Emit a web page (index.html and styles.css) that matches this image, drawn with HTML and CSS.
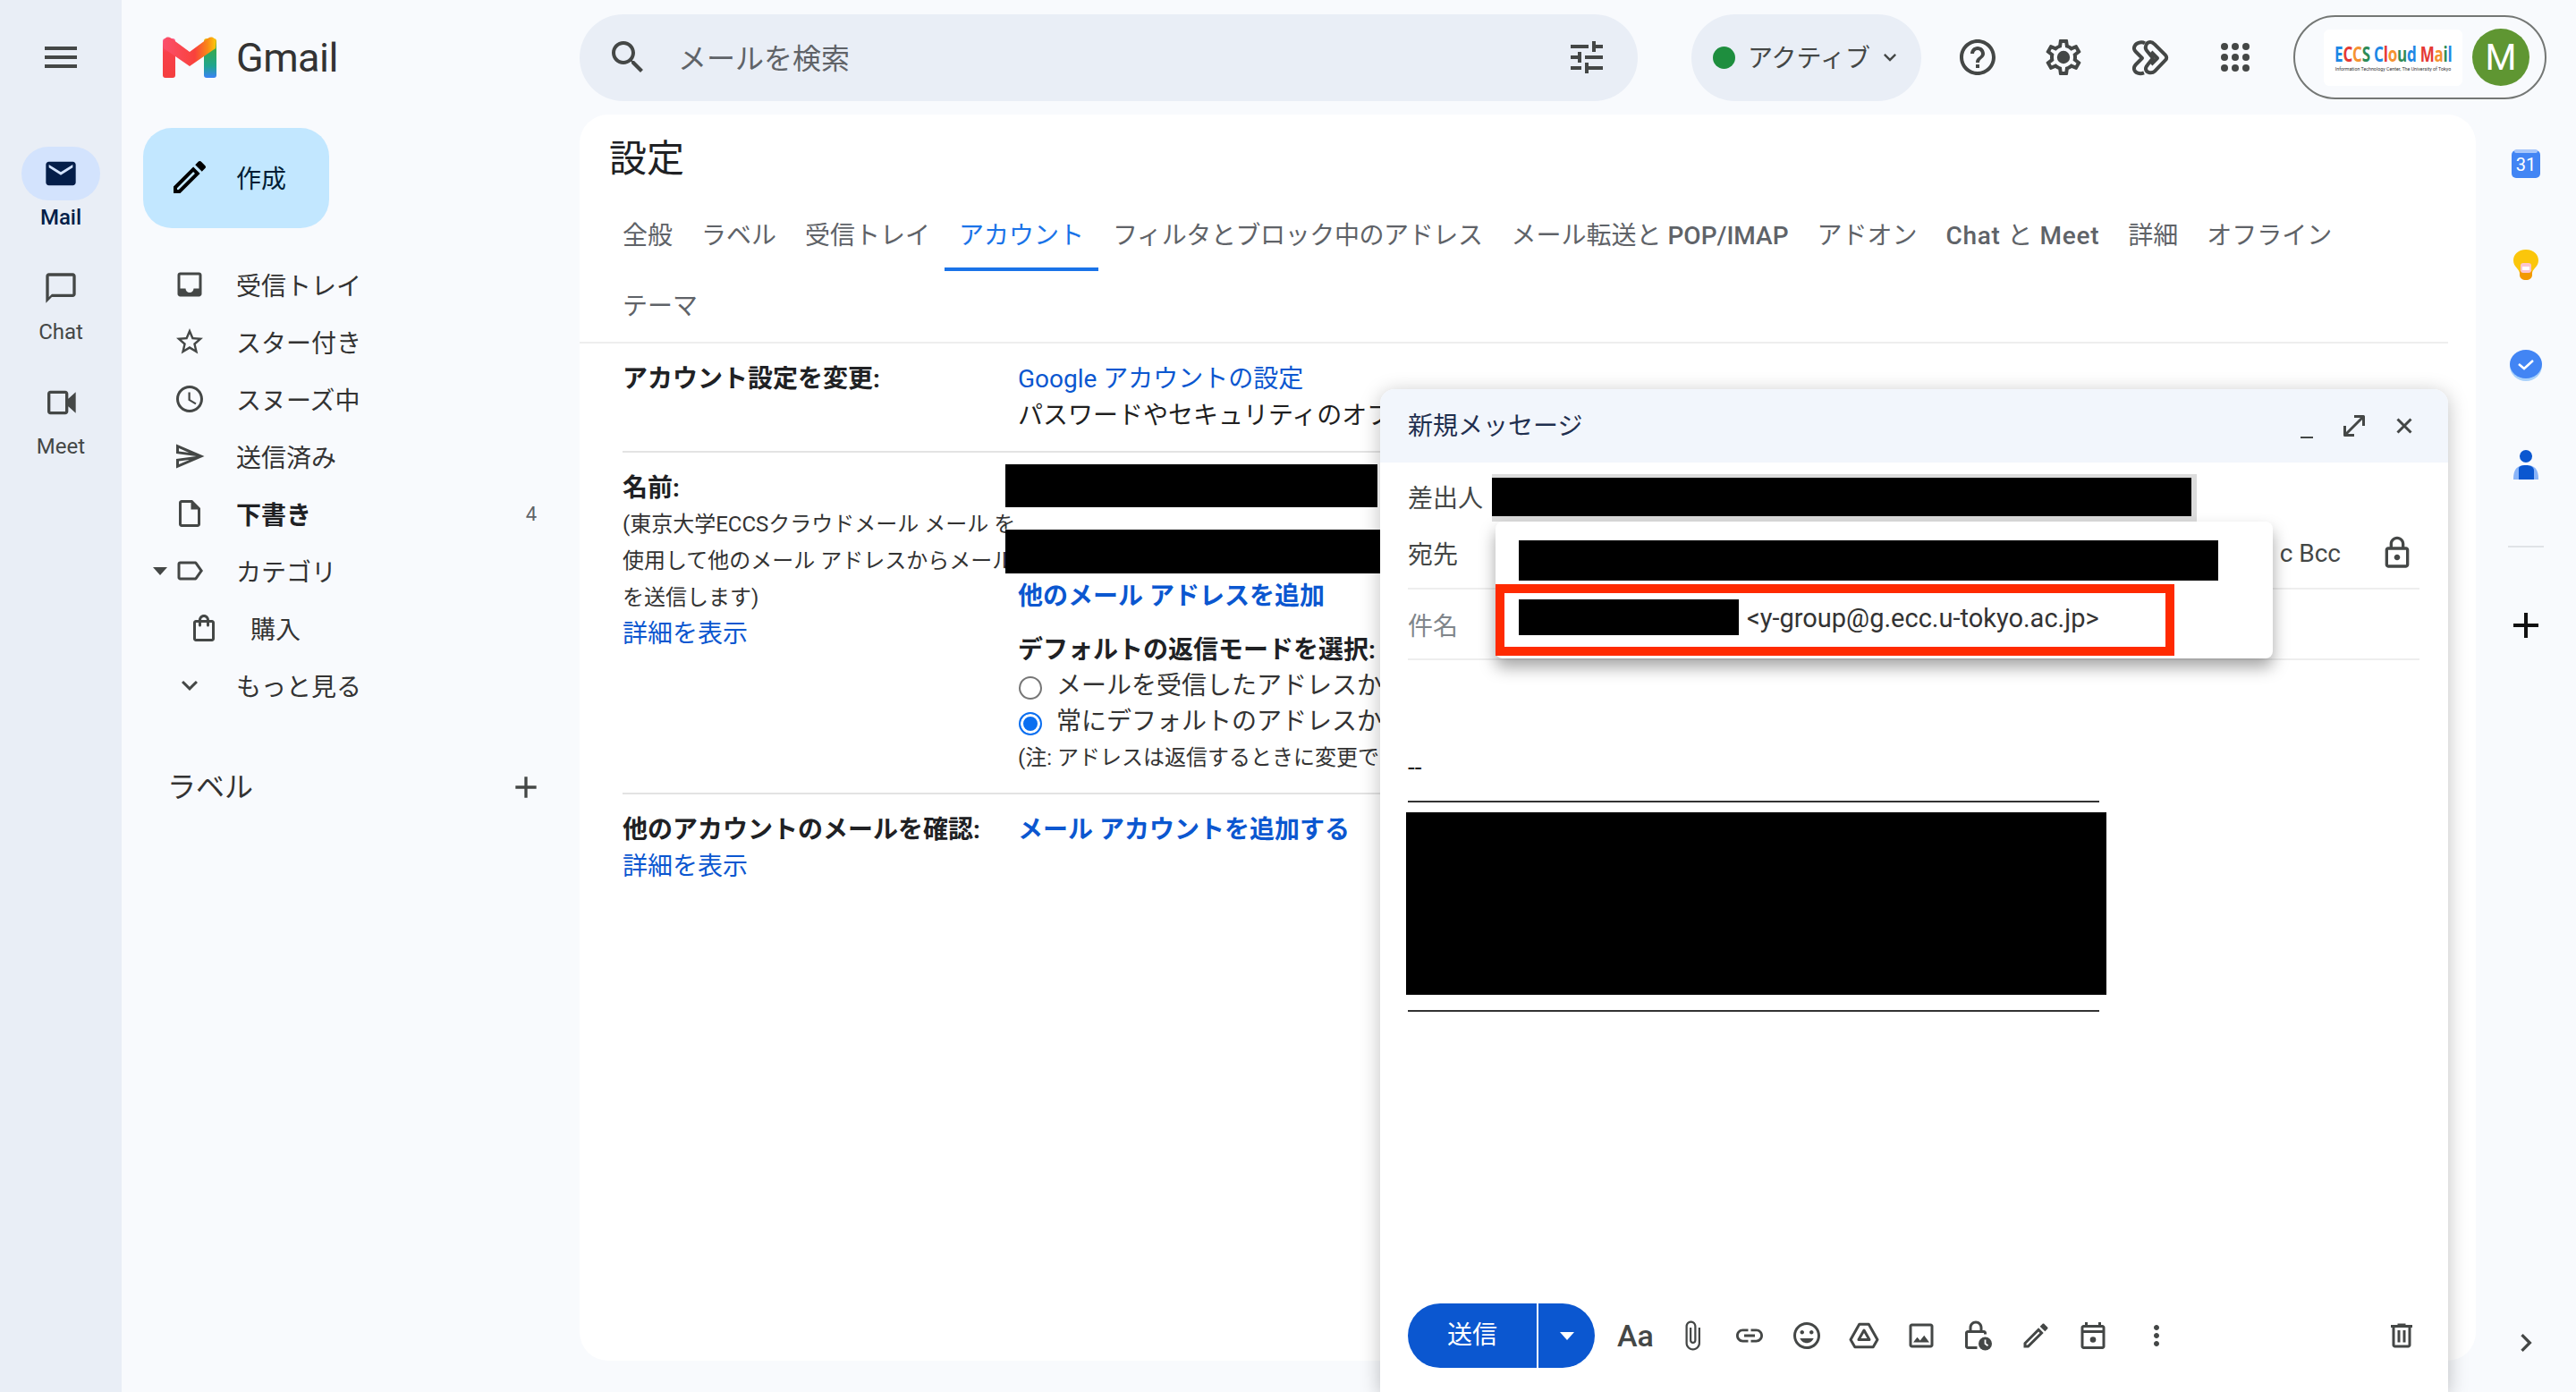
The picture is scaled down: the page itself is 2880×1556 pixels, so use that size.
FILE: index.html
```html
<!DOCTYPE html>
<html lang="ja">
<head>
  <meta charset="UTF-8">
  <meta name="viewport" content="width=device-width, initial-scale=1.0">
  <title>設定 - Gmail</title>
  <link rel="stylesheet" href="styles.css">
</head>
<body>
  <div class="app">
    <nav class="rail">
      <svg class="ic menu-ic" viewBox="0 0 24 24"><path d="M3 18h18v-2H3v2zm0-5h18v-2H3v2zm0-7v2h18V6H3z"/></svg>
      <div class="rail-item active">
        <div class="rail-pill"><svg class="ic mail-ic" viewBox="0 0 24 24"><path d="M20 4H4c-1.100 0-2 .9-2 2v12c0 1.100.9 2 2 2h16c1.100 0 2-.9 2-2V6c0-1.100-.9-2-2-2zm0 4l-8 5-8-5V6l8 5 8-5v2z"/></svg></div>
        <span>Mail</span>
      </div>
      <div class="rail-item">
        <div class="rail-pill"><svg class="ic" viewBox="0 0 24 24"><path d="M20 2H4c-1.100 0-2 .9-2 2v18l4-4h14c1.100 0 2-.9 2-2V4c0-1.100-.9-2-2-2zm0 14H6l-2 2V4h16v12z"/></svg></div>
        <span>Chat</span>
      </div>
      <div class="rail-item">
        <div class="rail-pill"><svg class="ic" viewBox="0 0 24 24"><path d="M5 4h10c1.100 0 2 .9 2 2v3.500l5-4.500v14l-5-4.500V18c0 1.100-.9 2-2 2H5c-1.100 0-2-.9-2-2V6c0-1.100.9-2 2-2zm0 2v12h10V6H5z"/></svg></div>
        <span>Meet</span>
      </div>
    </nav>

    <div class="content">
      <header class="topbar">
        <div class="brand">
          <svg class="gmail-m" viewBox="0 0 60 46">
            <defs>
              <linearGradient id="m-left" x1="0" y1="0" x2="0" y2="1"><stop offset="0" stop-color="#ff5d8f"/><stop offset=".35" stop-color="#f8404a"/><stop offset="1" stop-color="#f43f3f"/></linearGradient>
              <linearGradient id="m-right" x1="0" y1="0" x2="0" y2="1"><stop offset="0" stop-color="#fbbc04"/><stop offset=".3" stop-color="#34a853"/><stop offset=".7" stop-color="#1fa58f"/><stop offset="1" stop-color="#3b82f6"/></linearGradient>
              <linearGradient id="m-mid" x1="0" y1="0" x2="1" y2="0"><stop offset="0" stop-color="#fb4f6b"/><stop offset=".6" stop-color="#f9413c"/><stop offset=".85" stop-color="#f98a16"/><stop offset="1" stop-color="#fdc70a"/></linearGradient>
            </defs>
            <rect x="0" y="2" width="14" height="44" rx="3" fill="url(#m-left)"/>
            <rect x="46" y="2" width="14" height="44" rx="3" fill="url(#m-right)"/>
            <path d="M1 6C1 1 6-1 9 1.500L30 17 51 1.500C54-1 59 1 59 6V13L30 33 1 13z" fill="url(#m-mid)"/>
          </svg>
          <span class="brand-name">Gmail</span>
        </div>
        <div class="search">
          <svg class="ic ic-48" viewBox="0 0 24 24"><path d="M15.500 14h-.79l-.28-.27C15.410 12.590 16 11.110 16 9.500 16 5.910 13.090 3 9.500 3S3 5.910 3 9.500 5.910 16 9.500 16c1.610 0 3.090-.59 4.230-1.570l.27.28v.79l5 4.990L20.490 19l-4.990-5zm-6 0C7.010 14 5 11.990 5 9.500S7.010 5 9.500 5 14 7.010 14 9.500 11.990 14 9.500 14z"/></svg>
          <span class="search-text">メールを検索</span>
          <svg class="ic ic-48 search-tune" viewBox="0 0 24 24"><path d="M3 17v2h6v-2H3zM3 5v2h10V5H3zm10 16v-2h8v-2h-8v-2h-2v6h2zM7 9v2H3v2h4v2h2V9H7zm14 4v-2H11v2h10zm-6-4h2V7h4V5h-4V3h-2v6z"/></svg>
        </div>
        <div class="status-pill">
          <span class="status-dot"></span>
          <span class="status-text">アクティブ</span>
          <svg class="ic status-chev" viewBox="0 0 24 24"><path d="M16.590 8.590L12 13.170 7.410 8.590 6 10l6 6 6-6z"/></svg>
        </div>
        <div class="top-icons">
          <svg class="ic ic-48" viewBox="0 0 24 24"><path d="M11 18h2v-2h-2v2zm1-16C6.480 2 2 6.480 2 12s4.480 10 10 10 10-4.480 10-10S17.520 2 12 2zm0 18c-4.410 0-8-3.590-8-8s3.590-8 8-8 8 3.590 8 8-3.590 8-8 8zm0-14c-2.210 0-4 1.790-4 4h2c0-1.100.9-2 2-2s2 .9 2 2c0 2-3 1.750-3 5h2c0-2.250 3-2.500 3-5 0-2.210-1.790-4-4-4z"/></svg>
          <svg class="ic ic-48" viewBox="0 0 24 24"><path d="M19.430 12.980c.04-.32.07-.64.07-.98 0-.34-.03-.66-.07-.98l2.110-1.650c.19-.15.24-.42.12-.64l-2-3.460c-.09-.16-.26-.25-.44-.25-.06 0-.12.01-.17.03l-2.490 1c-.52-.4-1.080-.73-1.690-.98l-.38-2.650C14.460 2.180 14.250 2 14 2h-4c-.25 0-.46.18-.49.42l-.38 2.650c-.61.25-1.170.59-1.690.98l-2.490-1c-.06-.02-.12-.03-.18-.03-.17 0-.34.09-.43.25l-2 3.460c-.13.22-.07.49.12.64l2.110 1.650c-.04.32-.07.65-.07.98 0 .33.03.66.07.98l-2.110 1.650c-.19.15-.24.42-.12.64l2 3.460c.09.16.26.25.44.25.06 0 .12-.01.17-.03l2.490-1c.52.4 1.080.73 1.690.98l.38 2.650c.03.24.24.42.49.42h4c.25 0 .46-.18.49-.42l.38-2.650c.61-.25 1.170-.59 1.690-.98l2.490 1c.06.02.12.03.18.03.17 0 .34-.09.43-.25l2-3.460c.12-.22.07-.49-.12-.64l-2.110-1.650zm-1.980-1.710c.04.31.05.52.05.73 0 .21-.02.43-.05.73l-.14 1.130.89.7 1.080.84-.7 1.210-1.270-.51-1.040-.42-.9.68c-.43.32-.84.56-1.250.73l-1.060.43-.16 1.130-.2 1.350h-1.400l-.19-1.350-.16-1.130-1.060-.43c-.43-.18-.83-.41-1.230-.71l-.91-.7-1.060.43-1.270.51-.7-1.210 1.080-.84.89-.7-.14-1.130c-.03-.31-.05-.54-.05-.74s.02-.43.05-.73l.14-1.130-.89-.7-1.080-.84.7-1.210 1.270.51 1.040.42.9-.68c.43-.32.84-.56 1.250-.73l1.060-.43.16-1.130.2-1.350h1.390l.19 1.350.16 1.130 1.060.43c.43.18.83.41 1.230.71l.91.7 1.060-.43 1.270-.51.7 1.210-1.070.85-.89.7.14 1.130z"/><circle cx="12" cy="12" r="3.600"/></svg>
          <svg class="ic ic-48 line-ic" viewBox="0 0 24 24"><path d="M12.500 3.500c1 0 1.800.6 2.500 1.300l6 6c.8.8.8 2 0 2.800l-6 6.200c-1.500 1.500-4.500 1-5-1-.2-1 .3-1.700 1-2.500l3-3.800-3.300-4c-.8-.9-1-1.800-.7-2.700.3-1.300 1.300-2.300 2.500-2.300z"/><path d="M9.500 4.200C7.500 3 4 4 3.500 6.500c-.2 1 .3 1.800 1 2.500l3.500 3.500-3.500 3.500c-.8.8-1.200 1.700-1 2.700.5 2 3 3 5.500 2"/><path d="M13 9l3.500 3.500L13 16"/></svg>
          <svg class="ic ic-48" viewBox="0 0 24 24"><circle cx="6" cy="6" r="2"/><circle cx="12" cy="6" r="2"/><circle cx="18" cy="6" r="2"/><circle cx="6" cy="12" r="2"/><circle cx="12" cy="12" r="2"/><circle cx="18" cy="12" r="2"/><circle cx="6" cy="18" r="2"/><circle cx="12" cy="18" r="2"/><circle cx="18" cy="18" r="2"/></svg>
        </div>
        <div class="account">
          <div class="org-logo">
            <div class="org-name"><i class="c-b">E</i><i class="c-r">C</i><i class="c-y">C</i><i class="c-g">S</i> <i class="c-b">C</i><i class="c-r">l</i><i class="c-y">o</i><i class="c-g">u</i><i class="c-b">d</i> <i class="c-r">M</i><i class="c-y">a</i><i class="c-g">i</i><i class="c-b">l</i></div>
            <div class="org-sub">Information Technology Center, The University of Tokyo</div>
          </div>
          <div class="avatar">M</div>
        </div>
      </header>

      <div class="workarea">
        <aside class="sidebar">
          <div class="compose-btn">
            <svg class="ic pencil-ic" viewBox="0 0 24 24"><path d="M3 17.250V21h3.750L17.810 9.940l-3.750-3.750L3 17.250zM5.920 19H5v-.92l9.060-9.060.92.92L5.920 19zM20.710 5.630l-2.340-2.340c-.2-.2-.45-.29-.71-.29s-.51.1-.7.29l-1.830 1.830 3.750 3.750 1.830-1.830c.39-.39.39-1.020 0-1.410z"/></svg>
            <span>作成</span>
          </div>
          <ul class="nav">
            <li class="nav-row"><svg class="ic" viewBox="0 0 24 24"><path d="M19 3H4.990c-1.110 0-1.980.89-1.980 2L3 19c0 1.100.88 2 1.990 2H19c1.100 0 2-.9 2-2V5c0-1.110-.9-2-2-2zm0 12h-4c0 1.660-1.350 3-3 3s-3-1.340-3-3H4.990V5H19v10z"/></svg>受信トレイ</li>
            <li class="nav-row"><svg class="ic" viewBox="0 0 24 24"><path d="M22 9.240l-7.190-.62L12 2 9.190 8.630 2 9.240l5.460 4.730L5.820 21 12 17.270 18.180 21l-1.630-7.030L22 9.240zM12 15.400l-3.760 2.270 1-4.280-3.320-2.880 4.380-.38L12 6.100l1.710 4.040 4.380.38-3.320 2.880 1 4.280L12 15.400z"/></svg>スター付き</li>
            <li class="nav-row"><svg class="ic" viewBox="0 0 24 24"><path d="M11.990 2C6.470 2 2 6.480 2 12s4.470 10 9.990 10C17.520 22 22 17.520 22 12S17.520 2 11.990 2zM12 20c-4.420 0-8-3.580-8-8s3.580-8 8-8 8 3.580 8 8-3.580 8-8 8zm.5-13H11v6l5.250 3.150.75-1.230-4.500-2.670z"/></svg>スヌーズ中</li>
            <li class="nav-row"><svg class="ic" viewBox="0 0 24 24"><path d="M4.010 6.030l7.510 3.220-7.520-1 .01-2.220m7.500 8.720L4 17.970v-2.220l7.510-1M2.010 3L2 10l15 2-15 2 .01 7L23 12 2.010 3z"/></svg>送信済み</li>
            <li class="nav-row bold"><svg class="ic" viewBox="0 0 24 24"><path d="M14 2H6c-1.100 0-2 .9-2 2v16c0 1.100.9 2 2 2h12c1.100 0 2-.9 2-2V8l-6-6zm4 18H6V4h7v5h5v11z"/></svg>下書き<span class="nav-count">4</span></li>
            <li class="nav-row"><span class="nav-arrow"></span><svg class="ic" viewBox="0 0 24 24"><path d="M17.630 5.840C17.270 5.330 16.670 5 16 5L5 5.010C3.900 5.010 3 5.900 3 7v10c0 1.100.9 1.990 2 1.990L16 19c.67 0 1.270-.33 1.630-.84L22 12l-4.370-6.160zM16 17H5V7h11l3.550 5L16 17z"/></svg>カテゴリ</li>
            <li class="nav-row sub"><svg class="ic" viewBox="0 0 24 24"><path d="M18 6h-2c0-2.210-1.790-4-4-4S8 3.790 8 6H6c-1.100 0-2 .9-2 2v12c0 1.100.9 2 2 2h12c1.100 0 2-.9 2-2V8c0-1.100-.9-2-2-2zm-6-2c1.100 0 2 .9 2 2h-4c0-1.100.9-2 2-2zm6 16H6V8h2v2c0 .55.45 1 1 1s1-.45 1-1V8h4v2c0 .55.45 1 1 1s1-.45 1-1V8h2v12z"/></svg>購入</li>
            <li class="nav-row"><svg class="ic" viewBox="0 0 24 24"><path d="M16.590 8.590L12 13.170 7.410 8.590 6 10l6 6 6-6z"/></svg>もっと見る</li>
          </ul>
          <div class="labels-head">
            <span>ラベル</span>
            <svg class="ic" viewBox="0 0 24 24"><path d="M19 13h-6v6h-2v-6H5v-2h6V5h2v6h6v2z"/></svg>
          </div>
        </aside>

        <main class="settings">
          <h1 class="settings-title">設定</h1>
          <div class="tabs">
            <a class="tab">全般</a>
            <a class="tab">ラベル</a>
            <a class="tab">受信トレイ</a>
            <a class="tab active">アカウント</a>
            <a class="tab tight">フィルタとブロック中のアドレス</a>
            <a class="tab">メール転送と <b>POP/IMAP</b></a>
            <a class="tab">アドオン</a>
            <a class="tab wide"><b>Chat</b> と <b>Meet</b></a>
            <a class="tab">詳細</a>
            <a class="tab">オフライン</a>
            <a class="tab">テーマ</a>
          </div>

          <section class="row first">
            <div class="col-label"><strong>アカウント設定を変更:</strong></div>
            <div class="col-value">
              <a class="link">Google アカウントの設定</a>
              <div>パスワードやセキュリティのオプ</div>
            </div>
          </section>

          <section class="row names">
            <div class="col-label">
              <strong>名前:</strong>
              <div class="small">(東京大学ECCSクラウドメール メール を<br>使用して他のメール アドレスからメール<br>を送信します)</div>
              <a class="link more">詳細を表示</a>
            </div>
            <div class="col-value col-names">
              <div class="redact name-1"></div>
              <div class="redact name-2"></div>
              <a class="link strong">他のメール アドレスを追加</a>
              <div class="reply-head"><strong>デフォルトの返信モードを選択:</strong></div>
              <label class="radio-row"><input type="radio" name="reply">メールを受信したアドレスか</label>
              <label class="radio-row"><input type="radio" name="reply" checked>常にデフォルトのアドレスか</label>
              <div class="small">(注: アドレスは返信するときに変更で</div>
            </div>
          </section>

          <section class="row last">
            <div class="col-label">
              <strong>他のアカウントのメールを確認:</strong>
              <a class="link">詳細を表示</a>
            </div>
            <div class="col-value">
              <a class="link strong">メール アカウントを追加する</a>
            </div>
          </section>
        </main>

        <aside class="addons">
          <svg class="addon" viewBox="0 0 40 40"><rect x="4" y="4" width="32" height="31" rx="5" fill="#4285f4"/><rect x="7" y="3" width="26" height="4" rx="2" fill="#a8c7fa"/><text x="20" y="27" class="addon-num">31</text></svg>
          <svg class="addon" viewBox="0 0 40 40"><path d="M20 3C11 3 6 9 6 15c0 7 6 9 7 14h14c1-5 7-7 7-14C34 9 29 3 20 3z" fill="#fbc60b"/><path d="M13 27h14v4c0 4-3 6-7 6s-7-2-7-6z" fill="#f29900"/><rect x="14" y="18" width="12" height="11" rx="3" fill="#fcc5cf"/><rect x="16" y="22" width="8" height="4" fill="#fff"/></svg>
          <svg class="addon" viewBox="0 0 40 40"><ellipse cx="20" cy="21" rx="18" ry="17" fill="#a8d1fb"/><ellipse cx="20" cy="19" rx="18" ry="16" fill="#4285f4"/><path d="M12 19l6 5 10-9" fill="none" stroke="#fff" stroke-width="2.500"/></svg>
          <svg class="addon" viewBox="0 0 40 40"><circle cx="20" cy="10" r="7" fill="#0b57d0"/><path d="M6 36c0-12 4-16 14-16s14 4 14 16z" fill="#8ab4f8"/><path d="M12 36V24c0-3 3-4 8-4s9 2 9 6v10z" fill="#0b57d0"/></svg>
          <div class="addon-sep"></div>
          <svg class="ic ic-48 addon-plus" viewBox="0 0 24 24"><path d="M19 13h-6v6h-2v-6H5v-2h6V5h2v6h6v2z"/></svg>
          <svg class="ic addon-chev" viewBox="0 0 24 24"><path d="M8.590 16.590L13.170 12 8.590 7.410 10 6l6 6-6 6z"/></svg>
        </aside>
      </div>
    </div>

    <!-- compose window floats over settings -->
    <div class="compose">
      <div class="compose-head">
        <span>新規メッセージ</span>
        <div class="compose-ctrls">
          <span class="ctrl-min"></span>
          <svg class="ctrl-ic line-ic" viewBox="0 0 24 24"><path d="M6 18L18 6M12 5h7v7M5 12v7h7"/></svg>
          <svg class="ctrl-ic line-ic" viewBox="0 0 24 24"><path d="M7 7l10 10M17 7L7 17"/></svg>
        </div>
      </div>
      <div class="field from">
        <span class="field-name">差出人</span>
        <div class="redact from-box"></div>
      </div>
      <div class="field to">
        <span class="field-name">宛先</span>
        <span class="cc">c Bcc</span>
        <svg class="ic lock-ic" viewBox="0 0 24 24"><path d="M18 8h-1V6c0-2.760-2.240-5-5-5S7 3.240 7 6v2H6c-1.100 0-2 .9-2 2v10c0 1.100.9 2 2 2h12c1.100 0 2-.9 2-2V10c0-1.100-.9-2-2-2zM9 6c0-1.660 1.340-3 3-3s3 1.340 3 3v2H9V6zm9 14H6V10h12v10zm-6-3c1.100 0 2-.9 2-2s-.9-2-2-2-2 .9-2 2 .9 2 2 2z"/></svg>
      </div>
      <div class="field subject"><span class="field-name">件名</span></div>

      <div class="compose-body">
        <div class="sig-dash">--</div>
        <div class="sig-line"></div>
        <div class="redact sig-box"></div>
        <div class="sig-line"></div>
      </div>

      <div class="compose-foot">
        <div class="send-btn">
          <span class="send-main">送信</span>
          <span class="send-more"><i></i></span>
        </div>
        <span class="tool tool-aa">Aa</span>
        <svg class="ic tool" viewBox="0 0 24 24"><path d="M16.500 6v11.500c0 2.210-1.790 4-4 4s-4-1.790-4-4V5c0-1.380 1.120-2.500 2.500-2.500s2.500 1.120 2.500 2.500v10.500c0 .55-.45 1-1 1s-1-.45-1-1V6H10v9.500c0 1.380 1.120 2.500 2.500 2.500s2.500-1.120 2.500-2.500V5c0-2.210-1.790-4-4-4S7 2.790 7 5v12.500c0 3.040 2.460 5.500 5.500 5.500s5.500-2.460 5.500-5.500V6h-1.500z"/></svg>
        <svg class="ic tool" viewBox="0 0 24 24"><path d="M3.900 12c0-1.710 1.390-3.100 3.100-3.100h4V7H7c-2.760 0-5 2.240-5 5s2.240 5 5 5h4v-1.900H7c-1.710 0-3.100-1.390-3.100-3.100zM8 13h8v-2H8v2zm9-6h-4v1.900h4c1.710 0 3.100 1.390 3.100 3.100s-1.390 3.100-3.100 3.100h-4V17h4c2.760 0 5-2.240 5-5s-2.240-5-5-5z"/></svg>
        <svg class="ic tool" viewBox="0 0 24 24"><path d="M11.990 2C6.470 2 2 6.480 2 12s4.470 10 9.990 10C17.520 22 22 17.520 22 12S17.520 2 11.990 2zM12 20c-4.420 0-8-3.580-8-8s3.580-8 8-8 8 3.580 8 8-3.580 8-8 8zm3.500-9c.83 0 1.500-.67 1.500-1.500S16.330 8 15.500 8 14 8.670 14 9.500s.67 1.500 1.500 1.500zm-7 0c.83 0 1.500-.67 1.500-1.500S9.330 8 8.500 8 7 8.670 7 9.500 7.670 11 8.500 11zm3.500 6.500c2.330 0 4.310-1.460 5.110-3.500H6.890c.8 2.040 2.780 3.500 5.110 3.500z"/></svg>
        <svg class="ic tool line-ic" viewBox="0 0 24 24"><path d="M8.500 3.500h7L22 15l-3.200 5.500H5.200L2 15z"/><path d="M12 8l4 7H8z"/></svg>
        <svg class="ic tool" viewBox="0 0 24 24"><path d="M19 5v14H5V5h14m0-2H5c-1.100 0-2 .9-2 2v14c0 1.100.9 2 2 2h14c1.100 0 2-.9 2-2V5c0-1.100-.9-2-2-2zm-4.860 8.860l-3 3.870L9 13.140 6 17h12l-3.860-5.140z"/></svg>
        <svg class="ic tool" viewBox="0 0 24 24"><path d="M16 8h-1V6c0-2.760-2.240-5-5-5S5 3.240 5 6v2H4c-1.100 0-2 .9-2 2v10c0 1.100.9 2 2 2h7v-2H4V10h12v1h2v-1c0-1.100-.9-2-2-2zM7 6c0-1.660 1.340-3 3-3s3 1.340 3 3v2H7V6z"/><circle cx="17" cy="18" r="5"/><path d="M17 15v3l2 1.500" fill="none" stroke="#fff" stroke-width="1.200"/></svg>
        <svg class="ic tool" viewBox="0 0 24 24"><path d="M3 17.250V21h3.750L17.810 9.940l-3.750-3.750L3 17.250zM5.920 19H5v-.92l9.060-9.060.92.92L5.920 19zM20.710 5.630l-2.340-2.340c-.2-.2-.45-.29-.71-.29s-.51.1-.7.29l-1.830 1.830 3.750 3.750 1.830-1.830c.39-.39.39-1.020 0-1.410z"/></svg>
        <svg class="ic tool" viewBox="0 0 24 24"><path d="M19 4h-1V2h-2v2H8V2H6v2H5c-1.100 0-2 .9-2 2v14c0 1.100.9 2 2 2h14c1.100 0 2-.9 2-2V6c0-1.100-.9-2-2-2zm0 16H5V10h14v10zM5 8V6h14v2H5z"/><circle cx="12" cy="15" r="2.200"/></svg>
        <svg class="ic tool tool-more" viewBox="0 0 24 24"><path d="M12 8c1.100 0 2-.9 2-2s-.9-2-2-2-2 .9-2 2 .9 2 2 2zm0 2c-1.100 0-2 .9-2 2s.9 2 2 2 2-.9 2-2-.9-2-2-2zm0 6c-1.100 0-2 .9-2 2s.9 2 2 2 2-.9 2-2-.9-2-2-2z"/></svg>
        <svg class="ic tool tool-trash" viewBox="0 0 24 24"><path d="M15 4V3H9v1H4v2h1v13c0 1.100.9 2 2 2h10c1.100 0 2-.9 2-2V6h1V4h-5zm2 15H7V6h10v13zM9 8h2v9H9zm4 0h2v9h-2z"/></svg>
      </div>

      <div class="suggest">
        <div class="redact suggest-1"></div>
        <div class="suggest-hit">
          <div class="redact suggest-2"></div>
          <span>&lt;y-group@g.ecc.u-tokyo.ac.jp&gt;</span>
        </div>
      </div>
    </div>
  </div>
</body>
</html>
```

FILE: styles.css
```css
* {
  box-sizing: border-box;
}
html, body {
  margin: 0;
  height: 100%;
}
body {
  font-family: Roboto, "Noto Sans CJK JP", sans-serif;
  font-size: 28px;
  color: #1f1f1f;
  background: #f8fafd;
  overflow: hidden;
}
a {
  text-decoration: none;
}
ul {
  list-style: none;
  margin: 0;
  padding: 0;
}
.app {
  position: relative;
  display: flex;
  height: 100vh;
  overflow: hidden;
}

.ic {
  width: 40px;
  height: 40px;
  flex: none;
  fill: #444746;
}
.ic-48 {
  width: 48px;
  height: 48px;
}
.line-ic {
  fill: none;
  stroke: #444746;
  stroke-width: 2;
  stroke-linejoin: round;
}

/* left rail */
.rail {
  width: 136px;
  flex: none;
  background: #e9eef6;
  display: flex;
  flex-direction: column;
  align-items: center;
  padding-top: 40px;
}
.menu-ic {
  width: 48px;
  height: 48px;
  margin-bottom: 76px;
}
.rail-item {
  display: flex;
  flex-direction: column;
  align-items: center;
  gap: 4px;
  margin-bottom: 34px;
  font-size: 24px;
  line-height: 30px;
  color: #444746;
}
.rail-pill {
  width: 88px;
  height: 60px;
  border-radius: 30px;
  display: flex;
  align-items: center;
  justify-content: center;
}
.rail-item.active {
  color: #041e49;
  font-weight: 500;
}
.rail-item.active .rail-pill {
  background: #d3e3fd;
}
.mail-ic {
  fill: #041e49;
}

.content {
  flex: 1;
  min-width: 0;
  display: flex;
  flex-direction: column;
}

/* top bar */
.topbar {
  height: 128px;
  flex: none;
  display: flex;
  align-items: center;
}
.brand {
  width: 512px;
  flex: none;
  display: flex;
  align-items: center;
  gap: 22px;
  padding-left: 46px;
}
.gmail-m {
  width: 60px;
  height: 46px;
}
.brand-name {
  font-size: 45px;
  letter-spacing: -0.5px;
  color: #333;
}
.search {
  width: 1183px;
  height: 97px;
  flex: none;
  border-radius: 49px;
  background: #e9eef6;
  display: flex;
  align-items: center;
  gap: 32px;
  padding: 0 33px 0 30px;
  font-size: 32px;
  color: #5f6368;
}
.search-text {
  padding-bottom: 3px;
}
.search-tune {
  margin-left: auto;
}
.status-pill {
  width: 257px;
  height: 97px;
  flex: none;
  margin-left: 60px;
  border-radius: 49px;
  background: #e9eef6;
  display: flex;
  align-items: center;
  padding-left: 24px;
  color: #444746;
}
.status-dot {
  width: 25px;
  height: 25px;
  border-radius: 50%;
  background: #1e8e3e;
  margin-right: 14px;
}
.status-text {
  padding-bottom: 2px;
}
.status-chev {
  width: 28px;
  height: 28px;
  margin-left: 8px;
}
.top-icons {
  display: flex;
  gap: 48px;
  margin-left: 39px;
}
.account {
  width: 283px;
  height: 94px;
  flex: none;
  margin-left: 41px;
  border: 2px solid #747775;
  border-radius: 47px;
  display: flex;
  align-items: center;
  padding-left: 32px;
  gap: 11px;
}
.org-logo {
  width: 155px;
  height: 63px;
  background: #fff;
  border-radius: 6px;
  display: flex;
  flex-direction: column;
  align-items: center;
  justify-content: center;
}
.org-name {
  font-family: "Open Sans", sans-serif;
  font-size: 23px;
  font-weight: 700;
  line-height: 26px;
  letter-spacing: -0.3px;
  white-space: nowrap;
  transform: scaleX(.74);
}
.org-name i {
  font-style: normal;
}
.c-b { color: #1e88e5; }
.c-r { color: #e53935; }
.c-y { color: #f59331; }
.c-g { color: #2e8b57; }
.org-sub {
  font-size: 5.300px;
  line-height: 8px;
  color: #333;
  white-space: nowrap;
}
.avatar {
  width: 64px;
  height: 64px;
  border-radius: 50%;
  background: #5f9632;
  color: #fff;
  font-size: 40px;
  display: flex;
  align-items: center;
  justify-content: center;
}

.workarea {
  flex: 1;
  min-height: 0;
  display: flex;
}

/* sidebar */
.sidebar {
  width: 512px;
  flex: none;
  padding-top: 15px;
}
.compose-btn {
  width: 208px;
  height: 112px;
  margin-left: 24px;
  border-radius: 32px;
  background: #c2e7ff;
  display: flex;
  align-items: center;
  gap: 28px;
  padding: 0 0 3px 28px;
  color: #001d35;
}
.pencil-ic {
  width: 48px;
  height: 48px;
  fill: #000;
}
.nav {
  margin-top: 31px;
  width: 470px;
}
.nav-row {
  position: relative;
  height: 64px;
  display: flex;
  align-items: center;
  gap: 34px;
  padding-left: 58px;
  color: #333;
}
.nav-row .ic {
  width: 36px;
  height: 36px;
}
.nav-row.bold {
  font-weight: 700;
  color: #202124;
}
.nav-row.sub {
  padding-left: 74px;
}
.nav-count {
  margin-left: auto;
  font-size: 22px;
  font-weight: 400;
  color: #5f6368;
  margin-right: 6px;
}
.nav-arrow {
  position: absolute;
  left: 35px;
  top: 28px;
  border-left: 8px solid transparent;
  border-right: 8px solid transparent;
  border-top: 9px solid #444746;
}
.labels-head {
  width: 472px;
  margin-top: 58px;
  padding-left: 51px;
  display: flex;
  align-items: center;
  justify-content: space-between;
  font-size: 32px;
  line-height: 48px;
  color: #333;
}

/* settings card */
.settings {
  flex: 1;
  min-width: 0;
  margin-bottom: 35px;
  background: #fff;
  border-radius: 32px;
  padding: 24px 31px 0 0;
}
.settings-title {
  margin: 0 0 20px 33px;
  font-size: 42px;
  font-weight: 400;
  line-height: 52px;
  color: #202124;
}
.tabs {
  display: flex;
  flex-wrap: wrap;
  padding: 0 60px 0 32px;
  border-bottom: 2px solid #eee;
}
.tab {
  height: 79px;
  padding: 0 16px;
  line-height: 79px;
  color: #5f6368;
  white-space: nowrap;
}
.tab.tight {
  letter-spacing: -.4px;
}
.tab.wide {
  letter-spacing: .7px;
}
.tab b {
  font-weight: 500;
}
.tab.active {
  color: #1a73e8;
  box-shadow: inset 0 -4px 0 #1a73e8;
}
/* the rows stop where the compose window starts */
.row {
  width: 847px;
  display: flex;
  margin-left: 48px;
  padding: 19px 0 20px;
  border-bottom: 2px solid #e3e3e3;
  line-height: 41px;
  overflow: hidden;
}
.row.first {
  padding-bottom: 19px;
}
.row.names {
  padding-bottom: 18px;
}
.row.last {
  border-bottom: none;
}
.col-label {
  width: 442px;
  flex: none;
  white-space: nowrap;
}
.col-label strong,
.reply-head strong {
  font-weight: 700;
  color: #202124;
}
.col-value {
  flex: 1;
  min-width: 0;
  white-space: nowrap;
}
.col-names {
  margin-top: -6px;
}
.link {
  display: block;
  color: #0b57d0;
}
.link.more {
  margin-top: -1px;
}
.link.strong {
  font-weight: 700;
}
.small {
  font-size: 24px;
  color: #333;
}
.redact {
  background: #000;
}
.name-1 {
  width: 416px;
  height: 48px;
  margin: 0 0 25px -14px;
  position: relative;
}
.name-2 {
  width: 420px;
  height: 49px;
  margin: 0 0 5px -14px;
  position: relative;
}
.reply-head {
  margin-top: 19px;
}
.radio-row {
  display: flex;
  align-items: center;
  gap: 16px;
  line-height: 40px;
  color: #333;
}
.radio-row input {
  appearance: none;
  width: 26px;
  height: 26px;
  margin: 4px 0 0 1px;
  border: 2px solid #767676;
  border-radius: 50%;
  flex: none;
}
.radio-row input:checked {
  border-color: #0b6ff0;
  background: #0b6ff0;
  box-shadow: inset 0 0 0 3px #fff;
}

/* right add-on strip */
.addons {
  width: 112px;
  flex: none;
  display: flex;
  flex-direction: column;
  align-items: center;
  padding: 36px 0 35px;
}
.addon {
  width: 40px;
  height: 40px;
  flex: none;
  margin-bottom: 72px;
}
.addon-num {
  font-family: Roboto, sans-serif;
  font-size: 20px;
  fill: #fff;
  text-anchor: middle;
}
.addon-sep {
  width: 40px;
  height: 2px;
  flex: none;
  margin-top: -2px;
  background: #e0e3e7;
}
.addon-plus {
  margin-top: 63px;
  fill: #111;
}
.addon-chev {
  margin-top: auto;
}

/* compose window */
.compose {
  position: absolute;
  right: 143px;
  bottom: 0;
  width: 1194px;
  height: 1121px;
  background: #fff;
  border-radius: 16px 16px 0 0;
  box-shadow: 0 4px 22px rgba(0, 0, 0, .25);
  display: flex;
  flex-direction: column;
}
.compose-head {
  height: 82px;
  flex: none;
  background: #f2f6fc;
  border-radius: 16px 16px 0 0;
  display: flex;
  align-items: center;
  justify-content: space-between;
  padding: 0 31px 5px 31px;
  color: #1f2f4f;
}
.compose-ctrls {
  display: flex;
  align-items: center;
  gap: 20px;
  margin-top: 5px;
}
.ctrl-min {
  width: 14px;
  height: 2px;
  margin: 26px 8px 0 0;
  background: #444746;
}
.ctrl-ic {
  width: 36px;
  height: 36px;
}
.field {
  margin: 0 32px 0 31px;
  display: flex;
  align-items: center;
  color: #444746;
}
.field-name {
  width: 94px;
  flex: none;
}
.from {
  height: 66px;
  padding-top: 10px;
}
.from-box {
  width: 782px;
  height: 43px;
  box-shadow: 0 -4px 0 #dcdcdc, 0 6px 0 #dcdcdc, 6px 0 0 #dcdcdc, 6px 6px 0 #dcdcdc, 6px -4px 0 #dcdcdc;
}
.to {
  height: 76px;
  padding-bottom: 4px;
  border-bottom: 2px solid #eee;
}
.cc {
  margin-left: auto;
  margin-right: 43px;
}
.lock-ic {
  margin-right: 5px;
}
.subject {
  height: 79px;
  border-bottom: 2px solid #eee;
  color: #80868b;
}
.compose-body {
  padding: 100px 0 0 31px;
}
.sig-dash {
  line-height: 40px;
}
.sig-line {
  width: 773px;
  height: 2px;
  margin: 17px 0 0;
  background: #333;
}
.sig-box {
  width: 783px;
  height: 204px;
  margin: 11px 0 0 -2px;
}
.compose-foot {
  margin-top: auto;
  padding: 0 32px 27px 31px;
  display: flex;
  align-items: center;
  gap: 24px;
}
.send-btn {
  height: 72px;
  flex: none;
  display: flex;
  margin-right: 1px;
  color: #fff;
}
.send-main {
  width: 144px;
  background: #0b57d0;
  border-radius: 36px 0 0 36px;
  line-height: 72px;
  text-align: center;
}
.send-more {
  width: 63px;
  margin-left: 2px;
  background: #0b57d0;
  border-radius: 0 36px 36px 0;
  display: flex;
  align-items: center;
  justify-content: center;
}
.send-more i {
  border-left: 8px solid transparent;
  border-right: 8px solid transparent;
  border-top: 9px solid #fff;
}
.tool {
  width: 40px;
  height: 40px;
  flex: none;
  padding: 2px;
}
.tool-aa {
  padding: 0;
  font-size: 34px;
  font-weight: 500;
  line-height: 40px;
  color: #444746;
  text-align: center;
}
.tool-more {
  margin-left: 7px;
}
.tool-trash {
  margin-left: auto;
}

/* address suggestions */
.suggest {
  position: absolute;
  left: 129px;
  top: 148px;
  width: 869px;
  height: 153px;
  padding-top: 21px;
  background: #fff;
  border-radius: 8px;
  box-shadow: 0 10px 18px rgba(0, 0, 0, .35);
}
.suggest-1 {
  width: 782px;
  height: 45px;
  margin-left: 26px;
}
.suggest-hit {
  width: 759px;
  height: 80px;
  margin-top: 4px;
  border: 10px solid #ff2a00;
  display: flex;
  align-items: center;
  gap: 9px;
  padding-left: 16px;
  font-size: 29px;
  color: #333;
}
.suggest-2 {
  width: 246px;
  height: 40px;
  margin-top: -6px;
}
.suggest-hit span {
  padding-bottom: 4px;
}
```
